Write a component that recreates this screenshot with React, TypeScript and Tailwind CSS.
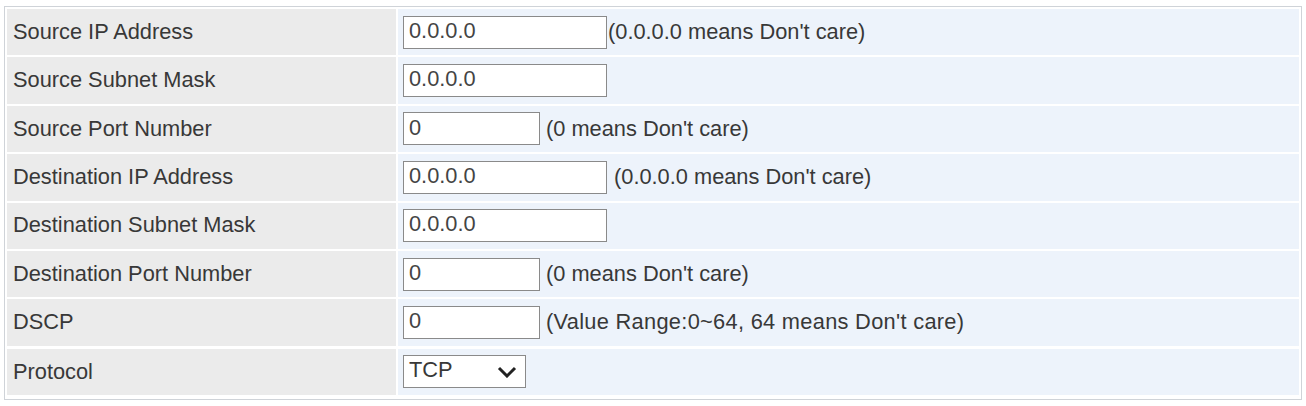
import React from "react";

type Row = {
  label: string;
  value?: string;
  width?: number;
  hint?: string;
  hintGap?: string;
  select?: boolean;
};

const rows: Row[] = [
  { label: "Source IP Address", value: "0.0.0.0", width: 204, hint: "(0.0.0.0 means Don't care)", hintGap: "ml-[1px]" },
  { label: "Source Subnet Mask", value: "0.0.0.0", width: 204 },
  { label: "Source Port Number", value: "0", width: 137, hint: "(0 means Don't care)", hintGap: "ml-[6px]" },
  { label: "Destination IP Address", value: "0.0.0.0", width: 204, hint: "(0.0.0.0 means Don't care)", hintGap: "ml-[7px]" },
  { label: "Destination Subnet Mask", value: "0.0.0.0", width: 204 },
  { label: "Destination Port Number", value: "0", width: 137, hint: "(0 means Don't care)", hintGap: "ml-[6px]" },
  { label: "DSCP", value: "0", width: 137, hint: "(Value Range:0~64, 64 means Don't care)", hintGap: "ml-[6px] tracking-[0.3px]" },
  { label: "Protocol", select: true },
];

export default function App() {
  return (
    <div
      className="w-[1306px] h-[406px] bg-white pt-[6px] pl-[4px]"
      style={{ fontFamily: '"Liberation Sans", Arial, sans-serif' }}
    >
      <div className="w-[1298px] border border-[#cfd3d8] pt-[2px] px-[2px] pb-[4px] flex flex-col gap-[2px]">
        {rows.map((r, i) => (
          <div
            key={r.label}
            className={`flex gap-[2px] ${i === rows.length - 1 ? "h-[47.4px] pt-[1px]" : "h-[46.4px]"}`}
          >
            <div className="w-[389px] bg-[#ebebeb] flex items-center pl-[6px] text-[21.8px] text-[#383838] leading-none">
              <span className="-mt-[1px]">{r.label}</span>
            </div>
            <div className="flex-1 bg-[#edf3fb] flex items-center pl-[5px] text-[21.8px] text-[#383838] leading-none">
              {r.select ? (
                <div className="h-[33px] w-[123px] border border-[#8a8a8a] bg-white flex items-center justify-between pl-[5px] pr-[8px]">
                  <span className="-mt-[4px]">TCP</span>
                  <svg width="20" height="12" viewBox="0 0 20 12">
                    <path d="M2 2 L10 10 L18 2" fill="none" stroke="#222" strokeWidth="3" />
                  </svg>
                </div>
              ) : (
                <>
                  <div
                    className="h-[33px] border border-[#8a8a8a] bg-white flex items-center pl-[5px] text-[#444]"
                    style={{ width: r.width }}
                  >
                    <span className="-mt-[3px]">{r.value}</span>
                  </div>
                  {r.hint && <span className={`${r.hintGap} -mt-[1px]`}>{r.hint}</span>}
                </>
              )}
            </div>
          </div>
        ))}
      </div>
    </div>
  );
}
